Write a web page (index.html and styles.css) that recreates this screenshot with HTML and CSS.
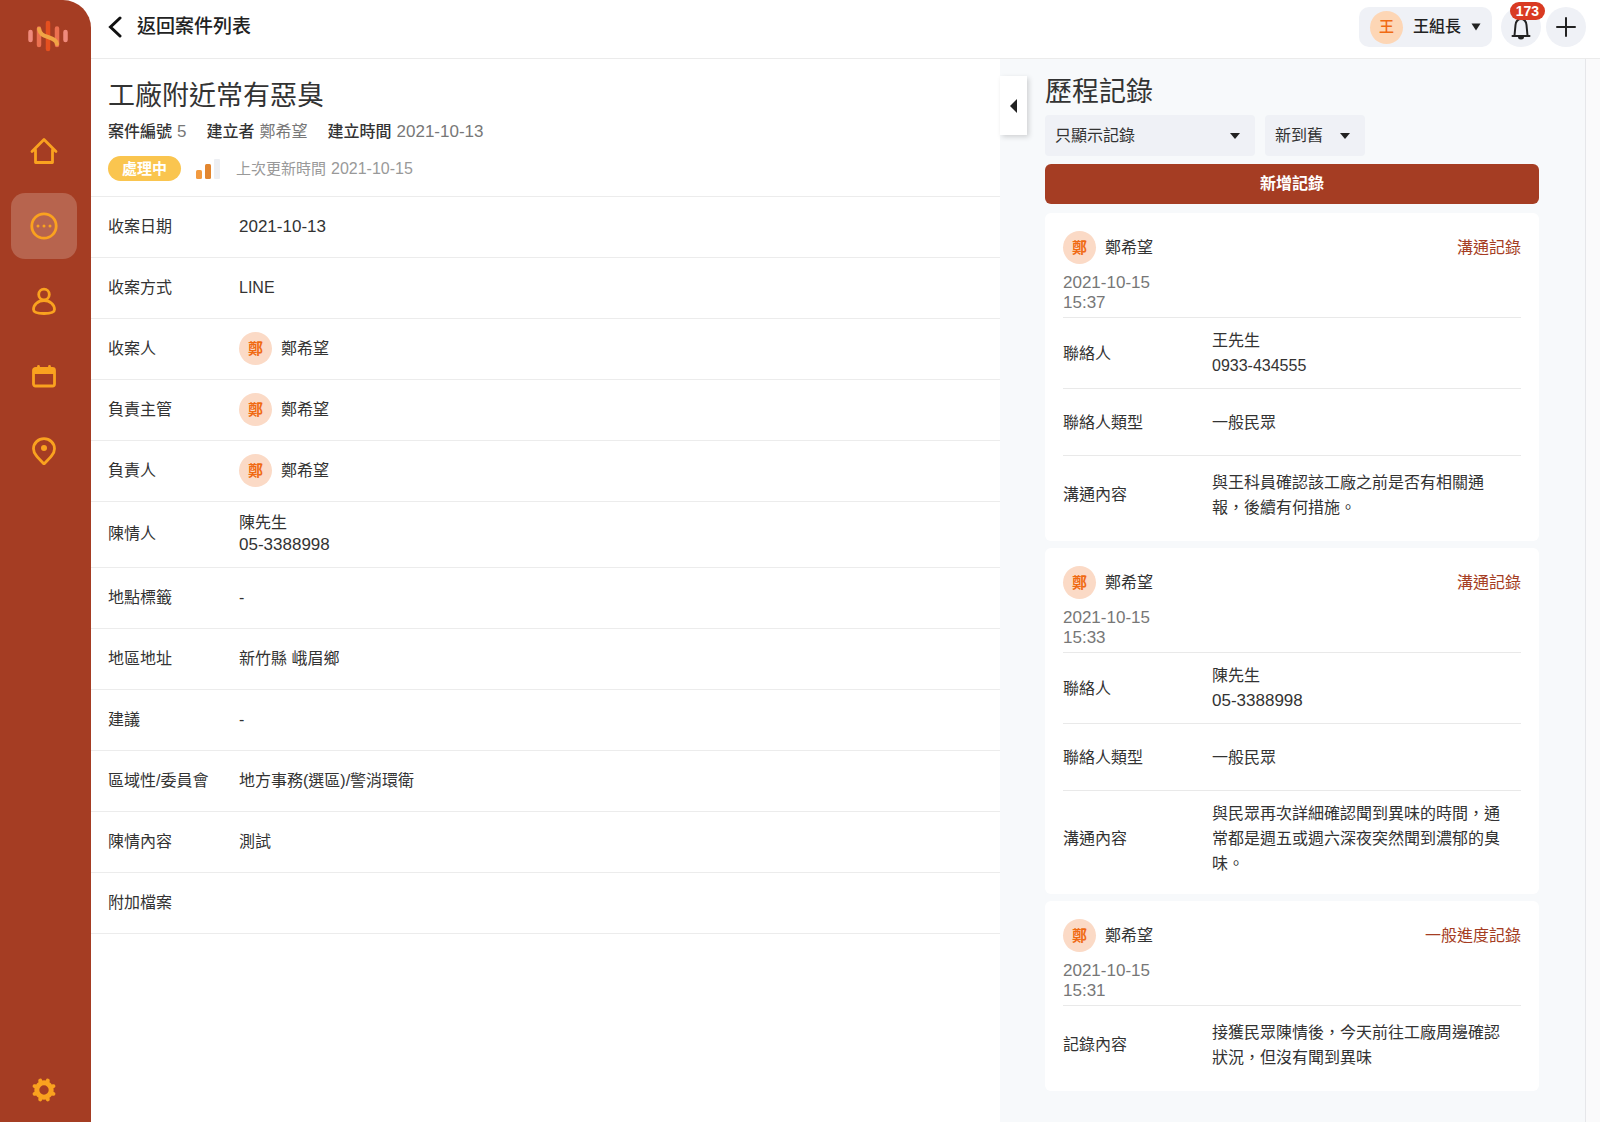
FILE: index.html
```html
<!DOCTYPE html>
<html lang="zh-Hant">
<head>
<meta charset="utf-8">
<meta name="viewport" content="width=device-width, initial-scale=1">
<title>工廠附近常有惡臭</title>
<link rel="stylesheet" href="styles.css">
</head>
<body>
<div class="app">
  <nav class="sidebar" aria-label="主選單">
    <a class="logo" href="#" aria-label="首頁">
      <svg width="40" height="32" viewBox="0 0 40 32" fill="none" stroke-linecap="round">
        <path d="M2.500 12v8M37.500 12v8" stroke="#f08a7c" stroke-width="4.500"/>
        <path d="M11 8.500v16.500M29 8.500v16.500" stroke="#ec7050" stroke-width="4.500"/>
        <path d="M20 3v26" stroke="#e5501f" stroke-width="4.500"/>
        <path d="M11 9c1 5 4 6.500 9 8s8.500 3 9 7" stroke="#f0a445" stroke-width="4"/>
      </svg>
    </a>
    <ul class="nav-list">
      <li><a class="nav-item" href="#" aria-label="總覽">
        <svg class="icon" viewBox="0 0 28 28"><path d="M2 14.500 14 2.500l12 12M5.500 13v12.500h17V13"/></svg>
      </a></li>
      <li><a class="nav-item active" href="#" aria-label="案件" aria-current="page">
        <svg class="icon" viewBox="0 0 28 28"><circle cx="14" cy="14" r="12.200"/><g class="solid"><circle cx="8" cy="14" r="1.500"/><circle cx="14" cy="14" r="1.500"/><circle cx="20" cy="14" r="1.500"/></g></svg>
      </a></li>
      <li><a class="nav-item" href="#" aria-label="人員">
        <svg class="icon" viewBox="0 0 28 28"><circle cx="14" cy="7.500" r="5.300"/><path d="M14 13.500c-6 0-10.500 4.500-10.500 9 0 3.500 4.500 4 10.500 4s10.500-.5 10.500-4c0-4.500-4.500-9-10.500-9z"/></svg>
      </a></li>
      <li><a class="nav-item" href="#" aria-label="行事曆">
        <svg class="icon" viewBox="0 0 28 28"><rect x="3.500" y="6.500" width="21" height="17.500" rx="2"/><path class="solid" d="M3.500 6h21v6h-21z"/><path d="M8.500 4.500V8M19.500 4.500V8"/></svg>
      </a></li>
      <li><a class="nav-item" href="#" aria-label="地點">
        <svg class="icon" viewBox="0 0 28 28"><path d="M14 27C7.500 20.500 3.500 16.500 3.500 11.700a10.500 10 0 0 1 21 0C24.500 16.500 20.500 20.500 14 27z"/><circle class="solid" cx="14" cy="11" r="3"/></svg>
      </a></li>
    </ul>
    <a class="nav-item settings" href="#" aria-label="設定">
      <svg class="icon gear" viewBox="0 0 28 28">
        <circle cx="14" cy="14" r="7.200"/>
        <path d="M10.500 5.500 10.200 4.600M17.500 5.500l.3-.9M22.500 10.500l.9-.3M22.500 17.500l.9.300M17.500 22.500l.3.900M10.500 22.500l-.3.900M5.500 17.500l-.9.300M5.500 10.500l-.9-.3"/>
      </svg>
    </a>
  </nav>

  <div class="page">
    <header class="topbar">
      <a class="back" href="#">
        <svg width="14" height="22" viewBox="0 0 14 22"><path d="M12 2 2.500 11 12 20"/></svg>
        返回案件列表
      </a>
      <div class="actions">
        <button class="user" type="button">
          <span class="avatar avatar-user">王</span>
          王組長
          <svg class="caret" width="10" height="8" viewBox="0 0 10 8"><path d="M.5.5h9L5 7.500z"/></svg>
        </button>
        <button class="round" type="button" aria-label="通知">
          <svg width="24" height="26" viewBox="0 0 24 26"><path d="M3.500 22h17M5.500 21.500 6.500 11a5.500 6 0 0 1 11 0l1 10.500"/><path d="M10 23a2 1.500 0 0 0 4 0z" fill="#222"/></svg>
          <span class="count">173</span>
        </button>
        <button class="round" type="button" aria-label="新增">
          <svg width="22" height="22" viewBox="0 0 22 22"><path d="M11 2v18M2 11h18"/></svg>
        </button>
      </div>
    </header>

    <div class="columns">
      <main class="case">
        <div class="case-head">
          <h1>工廠附近常有惡臭</h1>
          <dl class="meta">
            <div><dt>案件編號</dt><dd class="num">5</dd></div>
            <div><dt>建立者</dt><dd>鄭希望</dd></div>
            <div><dt>建立時間</dt><dd class="num">2021-10-13</dd></div>
          </dl>
          <div class="status">
            <span class="badge">處理中</span>
            <svg class="level" width="24" height="20" viewBox="0 0 24 20"><rect y="11" width="6" height="9" rx="1.500" fill="#f29a3f"/><rect x="9" y="5" width="6" height="15" rx="1.500" fill="#e2862f"/><rect x="18" width="6" height="20" rx="1" fill="#edeff3"/></svg>
            <span>上次更新時間</span>
            <time>2021-10-15</time>
          </div>
        </div>
        <dl class="fields">
          <div><dt>收案日期</dt><dd class="num">2021-10-13</dd></div>
          <div><dt>收案方式</dt><dd>LINE</dd></div>
          <div><dt>收案人</dt><dd class="person"><span class="avatar">鄭</span>鄭希望</dd></div>
          <div><dt>負責主管</dt><dd class="person"><span class="avatar">鄭</span>鄭希望</dd></div>
          <div><dt>負責人</dt><dd class="person"><span class="avatar">鄭</span>鄭希望</dd></div>
          <div><dt>陳情人</dt><dd>陳先生<br><span class="num">05-3388998</span></dd></div>
          <div><dt>地點標籤</dt><dd>-</dd></div>
          <div><dt>地區地址</dt><dd>新竹縣 峨眉鄉</dd></div>
          <div><dt>建議</dt><dd>-</dd></div>
          <div><dt>區域性/委員會</dt><dd>地方事務(選區)/警消環衛</dd></div>
          <div><dt>陳情內容</dt><dd>測試</dd></div>
          <div><dt>附加檔案</dt><dd></dd></div>
        </dl>
      </main>

      <aside class="history">
        <button class="toggle" type="button" aria-label="展開">
          <svg width="7" height="14" viewBox="0 0 7 14"><path d="M7 0v14L0 7z"/></svg>
        </button>
        <div class="history-body">
          <h2>歷程記錄</h2>
          <div class="filters">
            <div class="select wide">
              <select aria-label="顯示"><option>只顯示記錄</option></select>
              <svg class="caret" width="10" height="6" viewBox="0 0 10 6"><path d="M0 0h10L5 6z"/></svg>
            </div>
            <div class="select">
              <select aria-label="排序"><option>新到舊</option></select>
              <svg class="caret" width="10" height="6" viewBox="0 0 10 6"><path d="M0 0h10L5 6z"/></svg>
            </div>
          </div>
          <button class="add" type="button">新增記錄</button>

          <div class="records">
            <article class="record">
              <header>
                <div class="person"><span class="avatar">鄭</span>鄭希望</div>
                <span class="kind">溝通記錄</span>
              </header>
              <time>2021-10-15<br>15:37</time>
              <dl>
                <div><dt>聯絡人</dt><dd>王先生<br>0933-434555</dd></div>
                <div><dt>聯絡人類型</dt><dd>一般民眾</dd></div>
                <div><dt>溝通內容</dt><dd>與王科員確認該工廠之前是否有相關通報，後續有何措施。</dd></div>
              </dl>
            </article>
            <article class="record">
              <header>
                <div class="person"><span class="avatar">鄭</span>鄭希望</div>
                <span class="kind">溝通記錄</span>
              </header>
              <time>2021-10-15<br>15:33</time>
              <dl>
                <div><dt>聯絡人</dt><dd>陳先生<br><span class="num">05-3388998</span></dd></div>
                <div><dt>聯絡人類型</dt><dd>一般民眾</dd></div>
                <div><dt>溝通內容</dt><dd>與民眾再次詳細確認聞到異味的時間，通常都是週五或週六深夜突然聞到濃郁的臭味。</dd></div>
              </dl>
            </article>
            <article class="record">
              <header>
                <div class="person"><span class="avatar">鄭</span>鄭希望</div>
                <span class="kind">一般進度記錄</span>
              </header>
              <time>2021-10-15<br>15:31</time>
              <dl>
                <div><dt>記錄內容</dt><dd>接獲民眾陳情後，今天前往工廠周邊確認狀況，但沒有聞到異味</dd></div>
              </dl>
            </article>
          </div>
        </div>
        <div class="gutter"></div>
      </aside>
    </div>
  </div>
</div>
</body>
</html>
```

FILE: styles.css
```css
*, *::before, *::after { box-sizing: border-box; }

body {
  margin: 0;
  background: #fff;
  color: #333;
  font: 16px/22px "Liberation Sans", "Noto Sans CJK TC", sans-serif;
}

h1, h2, dl, dd, ul { margin: 0; padding: 0; }
ul { list-style: none; }
a { color: inherit; text-decoration: none; }
button, select { font: inherit; color: inherit; border: 0; cursor: pointer; }
svg { display: block; flex: none; }

h1, h2 { font-size: 27px; line-height: 36px; font-weight: 400; }

.num { font-size: 17px; }

.app { display: flex; min-height: 100vh; }

/* Sidebar */
.sidebar {
  position: sticky;
  top: 0;
  flex: none;
  display: flex;
  flex-direction: column;
  width: 91px;
  height: 100vh;
  padding: 20px 14px 10px 11px;
  background: #a53d23;
  border-top-right-radius: 28px;
}
.logo { padding-left: 17px; }
.nav-list { display: grid; gap: 9px; margin-top: 66px; }
.nav-item {
  display: flex;
  align-items: center;
  justify-content: center;
  height: 66px;
  border-radius: 14px;
}
.nav-item.active { background: #b7644e; }
.nav-item.settings { height: 44px; margin-top: auto; }
.icon {
  width: 28px;
  height: 28px;
  fill: none;
  stroke: #faa21f;
  stroke-width: 2.8;
  stroke-linecap: round;
  stroke-linejoin: round;
}
.icon .solid { fill: #faa21f; stroke: none; }
.icon.gear circle { stroke-width: 5; }
.icon.gear path { stroke-width: 4; }

/* Top bar */
.page { flex: 1; min-width: 0; display: flex; flex-direction: column; }
.topbar {
  display: flex;
  align-items: center;
  justify-content: space-between;
  height: 59px;
  padding: 0 14px 4px 17px;
  border-bottom: 1px solid #ebebeb;
}
.back {
  display: flex;
  align-items: center;
  gap: 15px;
  font-size: 19px;
  line-height: 24px;
  font-weight: 500;
  color: #222;
}
.back svg { fill: none; stroke: #111; stroke-width: 3; stroke-linecap: round; }
.actions { display: flex; align-items: center; gap: 5px; }
.user {
  display: flex;
  align-items: center;
  gap: 10px;
  height: 40px;
  margin-right: 4px;
  padding: 0 11px;
  border-radius: 10px;
  background: #eff1f6;
  font-weight: 500;
  color: #222;
}
.caret { fill: #222; }
.round {
  position: relative;
  display: flex;
  align-items: center;
  justify-content: center;
  width: 40px;
  height: 40px;
  padding: 0;
  border-radius: 50%;
  background: #eff1f6;
}
.round svg { fill: none; stroke: #222; stroke-width: 2; stroke-linecap: round; stroke-linejoin: round; }
.count {
  position: absolute;
  top: -5px;
  right: -4px;
  padding: 0 6px;
  border-radius: 9px;
  background: #d93a22;
  color: #fff;
  font-size: 14px;
  line-height: 18px;
  font-weight: 700;
}

.avatar {
  flex: none;
  display: flex;
  align-items: center;
  justify-content: center;
  width: 33px;
  height: 33px;
  border-radius: 50%;
  background: #fbdac6;
  color: #f06a13;
  font-size: 15px;
  font-weight: 700;
}
.avatar-user { font-weight: 500; background: #fdd6b5; }
.person { display: flex; align-items: center; gap: 9px; }

/* Case details */
.columns {
  flex: 1;
  display: grid;
  grid-template-columns: minmax(0, 1fr) 600px;
}
.case-head { padding: 19px 17px 15px; border-bottom: 1px solid #ececec; }
.meta { display: flex; gap: 20px; margin-top: 6px; line-height: 24px; }
.meta div { display: flex; gap: 5px; }
.meta dt { font-weight: 500; }
.meta dd { color: #777; }
.status {
  display: flex;
  align-items: center;
  gap: 5px;
  margin-top: 12px;
  color: #999;
  font-size: 15px;
}
.status time { font-size: 16px; }
.badge {
  width: 73px;
  border-radius: 13px;
  background: #fac54f;
  color: #fff;
  font-weight: 700;
  line-height: 25px;
  text-align: center;
}
.level { margin: 0 11px 0 10px; }
.fields > div {
  display: grid;
  grid-template-columns: 131px minmax(0, 1fr);
  align-items: center;
  min-height: 61px;
  padding: 10px 17px 11px;
  border-bottom: 1px solid #ececec;
}

/* History panel */
.history { display: flex; align-items: flex-start; background: #f7f9fb; }
.toggle {
  display: flex;
  align-items: center;
  justify-content: center;
  width: 27px;
  height: 59px;
  margin-top: 17px;
  padding: 0;
  background: #fff;
  box-shadow: 2px 2px 5px rgba(0, 0, 0, .16);
}
.toggle svg { fill: #222; }
.history-body { flex: 1; min-width: 0; padding: 15px 46px 33px 18px; }
.gutter {
  align-self: stretch;
  width: 15px;
  border-left: 1px solid #e6e7ea;
  background: #fafafb;
}
.filters { display: flex; gap: 10px; margin: 5px 0 8px; }
.select {
  display: grid;
  grid-template-columns: minmax(0, 1fr) 25px;
  align-items: center;
  width: 100px;
  height: 41px;
  border-radius: 4px;
  background: #eff1f6;
}
.select.wide { width: 210px; }
.select select {
  grid-area: 1 / 1 / 2 / 3;
  height: 41px;
  padding: 0 25px 0 10px;
  background: none;
  appearance: none;
}
.select .caret { grid-area: 1 / 2; pointer-events: none; }
.add {
  display: block;
  width: 100%;
  height: 40px;
  border-radius: 6px;
  background: #a53d23;
  color: #fff;
  font-weight: 700;
}
.records { display: grid; gap: 7px; margin-top: 9px; }
.record { padding: 18px 18px 8px; border-radius: 6px; background: #fff; }
.record header { display: flex; align-items: center; justify-content: space-between; }
.kind { color: #a53d23; }
.record time {
  display: block;
  margin-top: 9px;
  padding-bottom: 4px;
  border-bottom: 1px solid #e9e9e9;
  color: #777;
  font-size: 17px;
  line-height: 20px;
}
.record dl { line-height: 25px; }
.record dl > div {
  display: grid;
  grid-template-columns: 149px minmax(0, 1fr);
  align-items: center;
  min-height: 67px;
  padding: 10px 0;
  border-bottom: 1px solid #e9e9e9;
}
.record dl > div:last-child { min-height: 77px; border-bottom: 0; }
.record dd { padding-right: 10px; }
```
